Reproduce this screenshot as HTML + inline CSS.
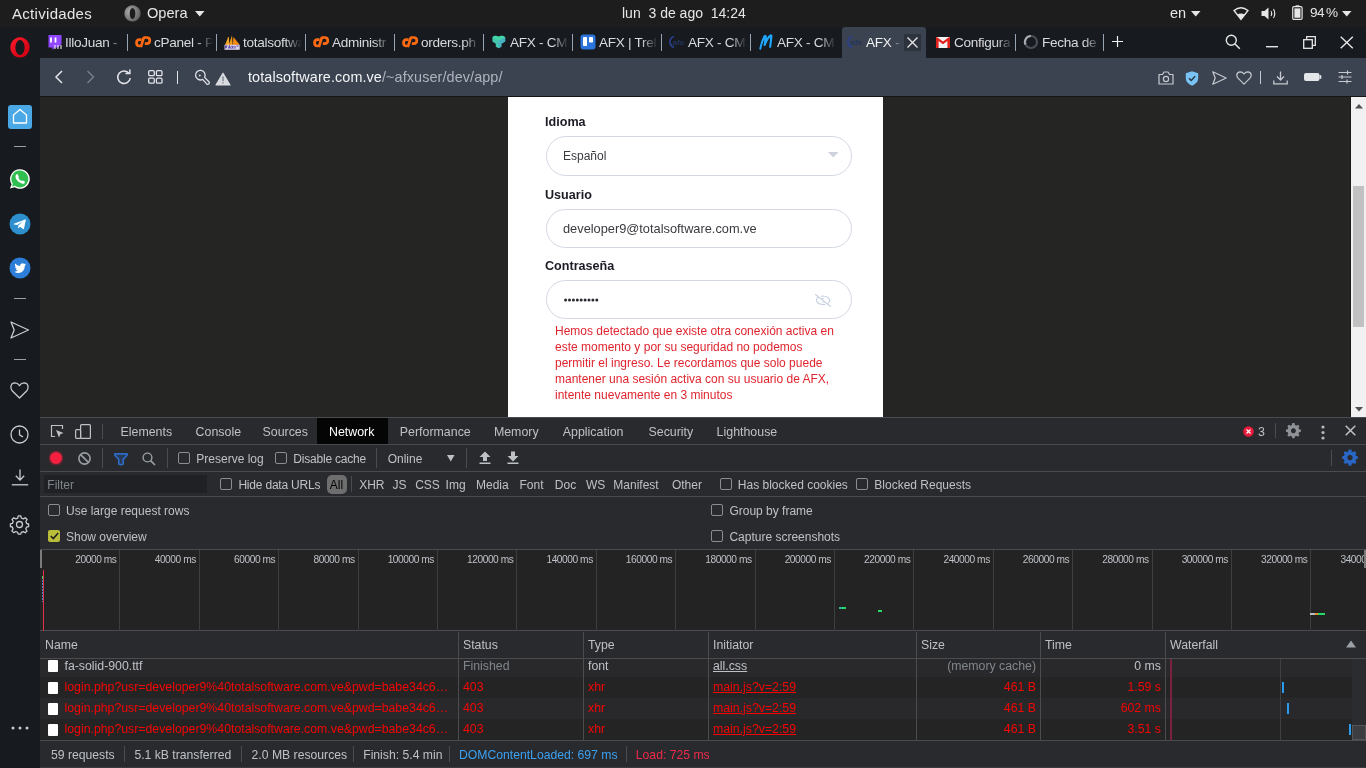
<!DOCTYPE html>
<html><head><meta charset="utf-8">
<style>
*{box-sizing:border-box}
html,body{margin:0;padding:0}
body{will-change:transform;width:1366px;height:768px;overflow:hidden;position:relative;background:#1d1d1d;font-family:"Liberation Sans",sans-serif;}
.a{position:absolute}
.t{position:absolute;white-space:pre;line-height:1}
svg{position:absolute;overflow:visible}
/* top bar */
#top{left:0;top:0;width:1366px;height:27px;background:#1d1d1d;color:#e6e6e6;font-size:14.5px}
#tabs{left:0;top:27px;width:1366px;height:31px;background:#171a1e}
#side{left:0;top:58px;width:40px;height:710px;background:#171a1e}
#addr{left:40px;top:58px;width:1326px;height:38px;background:#3b4250}
#page{left:40px;top:96px;width:1326px;height:321px;background:#252524;border-top:1px solid #151515}
#dev{left:40px;top:417px;width:1326px;height:351px;background:#292a2d;color:#bdc1c6;font-size:12.5px}
.tab{position:absolute;top:0;height:31px;width:89px}
.tab .tt{position:absolute;left:26px;top:8px;font-size:13.6px;letter-spacing:-0.3px;color:#d8dadd;white-space:pre;width:59px;overflow:hidden;line-height:16px;-webkit-mask-image:linear-gradient(90deg,#000 72%,transparent)}
.tab .sep{position:absolute;right:0;top:7px;width:1px;height:17px;background:#98a3b3}
.tab .ic{position:absolute;left:8px;top:7px;width:16px;height:16px}
.hl{position:absolute;left:0;width:1326px;height:1px;background:#474a4f}
.vl{position:absolute;width:1px;background:#4a4c50}
.cb{position:absolute;width:12px;height:12px;border:1px solid #8a8d91;border-radius:2px}
.dt{position:absolute;white-space:pre;line-height:1;font-size:12.5px;color:#bdc1c6}
</style></head><body>

<!-- ===== GNOME top bar ===== -->
<div id="top" class="a">
  <div class="t" style="left:12px;top:6px;font-size:15px;letter-spacing:0.3px">Actividades</div>
  <svg style="left:124px;top:5px" width="17" height="17" viewBox="0 0 17 17"><defs><radialGradient id="og" cx="0.35" cy="0.4" r="0.7"><stop offset="0" stop-color="#b0b0b0"/><stop offset="1" stop-color="#5a5a5a"/></radialGradient></defs><path fill-rule="evenodd" d="M8.5 0.3A8.1 8.1 0 1 1 8.49 0.3ZM8.5 3A2.9 5.5 0 1 0 8.51 3Z" fill="url(#og)"/></svg>
  <div class="t" style="left:147px;top:6px;font-size:14.6px">Opera</div>
  <svg style="left:195px;top:11px" width="10" height="6"><path d="M0 0H9.5L4.75 5.5Z" fill="#e6e6e6"/></svg>
  <div class="t" style="left:622px;top:6px;font-size:14px">lun  3 de ago  14:24</div>
  <div class="t" style="left:1170px;top:6px;font-size:14.5px">en</div>
  <svg style="left:1191px;top:11px" width="10" height="6"><path d="M0 0H9.5L4.75 5.5Z" fill="#e6e6e6"/></svg>
  <svg style="left:1233px;top:7px" width="16" height="13" viewBox="0 0 16 13"><path d="M1 3.5 Q8 -2 15 3.5 L8 12.5Z" fill="none" stroke="#e6e6e6" stroke-width="1.3"/><path d="M4.2 7.4 Q8 5.6 11.8 7.4 L8 12.5Z" fill="#e6e6e6"/></svg>
  <svg style="left:1261px;top:7px" width="16" height="13" viewBox="0 0 16 13"><path d="M0.5 4H3.5L7.5 0.5V12.5L3.5 9H0.5Z" fill="#e6e6e6"/><path d="M10 4Q11.5 6.5 10 9M12.5 2Q15 6.5 12.5 11" fill="none" stroke="#e6e6e6" stroke-width="1.1"/></svg>
  <svg style="left:1291.5px;top:5px" width="11" height="15" viewBox="0 0 12 16" preserveAspectRatio="none"><rect x="4" y="0.3" width="4" height="1.6" fill="#e6e6e6"/><rect x="0.8" y="1.8" width="10.2" height="13.6" rx="1.3" fill="none" stroke="#e6e6e6" stroke-width="1.3"/><rect x="2.6" y="3.6" width="6.6" height="10" fill="#e6e6e6"/></svg>
  <div class="t" style="left:1310px;top:6px;font-size:13.6px;letter-spacing:-0.6px">94&#8201;%</div>
  <svg style="left:1342px;top:11px" width="10" height="6"><path d="M0 0H9.5L4.75 5.5Z" fill="#e6e6e6"/></svg>
</div>

<!-- ===== Tab bar ===== -->
<div id="tabs" class="a">
  <svg style="left:10px;top:10px" width="20" height="21" viewBox="0 0 20 21"><defs><linearGradient id="rg" x1="0" y1="0" x2="1" y2="1"><stop offset="0" stop-color="#ff1b2d"/><stop offset="1" stop-color="#c8000f"/></linearGradient></defs><path fill-rule="evenodd" d="M10 0.3A9.6 10.1 0 1 1 9.99 0.3ZM10 2.9A4.6 7.6 0 1 0 10.01 2.9Z" fill="url(#rg)"/></svg>
  <div class="tab" style="left:39px"><svg class="ic" width="16" height="16" viewBox="0 0 16 16"><path d="M1.5 1H14.5V10L11 13.5H8L5.5 16V13.5H1.5Z" fill="#9146ff"/><path d="M4 3.5V8.5M8.5 3.5V8.5" stroke="#fff" stroke-width="1.8"/><path d="M7 12H9M10 12H12M13 12H15M7 14H9M10 14H12M13 14H15" stroke="#fff" stroke-width="1.2"/></svg><div class="tt">IlloJuan - </div><div class="sep"></div></div>
<div class="tab" style="left:128px"><svg class="ic" style="left:7px;top:9px;width:16px;height:12px" width="16" height="12" viewBox="0 0 16 12"><g fill="none" stroke="#ff6a12" stroke-width="2.7"><path d="M6.6 3.6H4.6Q1.5 3.6 1.5 6.8Q1.5 10 4.6 10H5.4"/><path d="M5.8 11.2L8.8 1.5"/><path d="M8.3 1.5H11.6Q14.8 1.5 14.8 4.6Q14.8 7.7 11.6 7.7H9.8"/></g></svg><div class="tt">cPanel - P</div><div class="sep"></div></div>
<div class="tab" style="left:217px"><svg class="ic" style="left:7px;top:7px" width="16" height="16" viewBox="0 0 16 16"><path d="M1 11L4.2 3.3Q4.6 2.8 4.9 3.5L5.3 11Z" fill="#f7a928"/><path d="M4.8 11L8 1.2L8.6 11Z" fill="#f59a1c"/><path d="M8.8 11L9.4 3L15.6 10.5L13.5 11Z" fill="#f08a10"/><rect x="0.5" y="10.8" width="15.2" height="5" fill="#d8d4e8"/><path d="M1.5 14.5V12H3.5M1.5 13.3H3M4.5 14.5L5.5 12L6.5 14.5M7.5 12L9.5 14.5M9.5 12L7.5 14.5M11 12V14.5M12.5 12L14.5 12" stroke="#5d44a8" stroke-width="1.1" fill="none"/></svg><div class="tt">totalsoftware</div><div class="sep"></div></div>
<div class="tab" style="left:306px"><svg class="ic" style="left:7px;top:9px;width:16px;height:12px" width="16" height="12" viewBox="0 0 16 12"><g fill="none" stroke="#ff6a12" stroke-width="2.7"><path d="M6.6 3.6H4.6Q1.5 3.6 1.5 6.8Q1.5 10 4.6 10H5.4"/><path d="M5.8 11.2L8.8 1.5"/><path d="M8.3 1.5H11.6Q14.8 1.5 14.8 4.6Q14.8 7.7 11.6 7.7H9.8"/></g></svg><div class="tt">Administr</div><div class="sep"></div></div>
<div class="tab" style="left:395px"><svg class="ic" style="left:7px;top:9px;width:16px;height:12px" width="16" height="12" viewBox="0 0 16 12"><g fill="none" stroke="#ff6a12" stroke-width="2.7"><path d="M6.6 3.6H4.6Q1.5 3.6 1.5 6.8Q1.5 10 4.6 10H5.4"/><path d="M5.8 11.2L8.8 1.5"/><path d="M8.3 1.5H11.6Q14.8 1.5 14.8 4.6Q14.8 7.7 11.6 7.7H9.8"/></g></svg><div class="tt">orders.ph</div><div class="sep"></div></div>
<div class="tab" style="left:484px"><svg class="ic" style="left:8px;top:8px;width:14px;height:14px" width="14" height="14" viewBox="0 0 14 14"><path d="M0.4 2.2Q3.2 -0.3 6.6 1.8Q10 -0.3 13.2 2.2V6.6L9.4 8.8V11.8L6.6 13.3L3.8 11.8V8.8L0.4 6.6Z" fill="#45c7ad"/><path d="M6.6 5.6L13.2 2.2V6.6L9.4 8.8V11.8L6.6 13.3Z" fill="#4aa9c9" opacity="0.75"/><path d="M0.4 2.2Q3.2 -0.3 6.6 1.8Q10 -0.3 13.2 2.2L6.6 5.6Z" fill="#3fd9a6" opacity="0.8"/></svg><div class="tt">AFX - CMS</div><div class="sep"></div></div>
<div class="tab" style="left:573px"><svg class="ic" style="left:7px" width="16" height="16" viewBox="0 0 16 16"><rect x="0.5" y="0.5" width="15" height="15" rx="3" fill="#2a74dc"/><rect x="3" y="3" width="4" height="9" rx="0.8" fill="#fff"/><rect x="9" y="3" width="4" height="5.5" rx="0.8" fill="#fff"/></svg><div class="tt">AFX | Trel</div><div class="sep"></div></div>
<div class="tab" style="left:662px"><svg class="ic" style="left:7px;top:8px;width:16px;height:14px" width="16" height="14" viewBox="0 0 16 14"><path d="M5 1.5Q0.5 3 1 7.5Q1.8 11.5 5 12.5" fill="none" stroke="#2a3f8f" stroke-width="1.6"/><text x="3.5" y="10" font-family="Liberation Sans" font-size="8" font-weight="700" fill="#24355e">afx</text></svg><div class="tt">AFX - CMS</div><div class="sep"></div></div>
<div class="tab" style="left:751px"><svg class="ic" style="left:8px;top:7px;width:14px;height:16px" width="14" height="16" viewBox="0 0 14 16"><path d="M1.3 14.6Q2.8 7 5.6 2.4Q6.6 1.2 6.8 2.8L5.6 11Q8.5 4 11.3 1.6Q12.6 0.8 12.4 2.6L11.2 12.8" fill="none" stroke="#1ea7fd" stroke-width="2.1" stroke-linecap="round" stroke-linejoin="round"/></svg><div class="tt">AFX - CMS</div></div>
<div class="a" style="left:842px;top:0px;width:84px;height:31px;background:#3b4250;border-radius:3px 3px 0 0">
  <svg style="left:5px;top:8px" width="16" height="14" viewBox="0 0 16 14"><path d="M5 1.5Q0.5 3 1 7.5Q1.8 11.5 5 12.5" fill="none" stroke="#2a3f8f" stroke-width="1.6"/><text x="3.5" y="10" font-family="Liberation Sans" font-size="8" font-weight="700" fill="#24355e">afx</text></svg>
  <div class="tt" style="position:absolute;left:24px;top:8px;font-size:13.6px;letter-spacing:-0.25px;color:#f2f2f2;white-space:pre;line-height:16px;width:37px;overflow:hidden;-webkit-mask-image:linear-gradient(90deg,#000 60%,transparent)">AFX - CMS</div>
  <div class="a" style="left:62px;top:7px;width:17px;height:17px;background:#2d333d"></div>
  <svg style="left:65px;top:10px" width="11" height="11" viewBox="0 0 11 11"><path d="M0.5 0.5L10.5 10.5M10.5 0.5L0.5 10.5" stroke="#e8e8e8" stroke-width="1.3"/></svg>
</div>
<div class="tab" style="left:926px"><svg class="ic" style="left:10px;top:10px;width:14px;height:11px" width="14" height="11" viewBox="0 0 14 11"><rect x="0" y="0" width="14" height="11" rx="0.8" fill="#f2f2f2"/><path d="M0 0.8V11H2.6V4L7 7.3L11.4 4V11H14V0.8L13.2 0L7 4.6L0.8 0Z" fill="#e0201b"/></svg><div class="tt" style="left:28px">Configura</div><div class="sep" style="right:-1px"></div></div>
<div class="tab" style="left:1015px"><svg class="ic" width="16" height="16" viewBox="0 0 16 16"><circle cx="8" cy="8" r="6" fill="none" stroke="#4a4f57" stroke-width="2.2"/><path d="M8 2A6 6 0 0 0 2.5 10.5" fill="none" stroke="#a9adb3" stroke-width="2.2"/></svg><div class="tt" style="left:27px">Fecha de</div><div class="sep" style="right:0"></div></div>
<svg style="left:1111px;top:8px" width="14" height="14" viewBox="0 0 14 14"><path d="M6.5 1V12M1 6.5H12" stroke="#f0f0f0" stroke-width="1.2"/></svg>
<svg style="left:1225px;top:7px" width="16" height="16" viewBox="0 0 16 16"><circle cx="6.3" cy="6.3" r="5" fill="none" stroke="#e6e6e6" stroke-width="1.4"/><path d="M10 10L14.8 14.8" stroke="#e6e6e6" stroke-width="1.5"/></svg>
<svg style="left:1266px;top:19px" width="12" height="2"><rect x="0" y="0" width="12" height="1.4" fill="#e6e6e6"/></svg>
<svg style="left:1303px;top:9px" width="14" height="13" viewBox="0 0 14 13"><rect x="0.7" y="3.7" width="8.6" height="8.6" fill="none" stroke="#e6e6e6" stroke-width="1.3"/><path d="M3.7 3.7V0.7H12.3V9.3H9.3" fill="none" stroke="#e6e6e6" stroke-width="1.3"/></svg>
<svg style="left:1340px;top:9px" width="14" height="13" viewBox="0 0 14 13"><path d="M0.7 0.7L12.8 12.3M12.8 0.7L0.7 12.3" stroke="#e6e6e6" stroke-width="1.4"/></svg>

</div>

<!-- ===== sidebar ===== -->
<div id="side" class="a">
  <div class="a" style="left:8px;top:47px;width:24px;height:24px;background:#4aa8e6;border-radius:3px"></div>
  <svg style="left:12px;top:50px" width="16" height="17" viewBox="0 0 16 17"><path d="M1.5 7L8 1.5L14.5 7V15H1.5Z" fill="none" stroke="#fff" stroke-width="1.3" stroke-linejoin="round"/></svg>
  <div class="a" style="left:14px;top:88px;width:12px;height:1px;background:#9aa0a8"></div>
  <svg style="left:9px;top:110px" width="22" height="22" viewBox="0 0 22 22"><path d="M11 1.2A9.8 9.8 0 1 1 5.6 19.2L1 20.6L2.6 16.2A9.8 9.8 0 0 1 11 1.2Z" fill="#fff"/><path d="M11 2.6A8.4 8.4 0 1 1 6 17.8L3 18.6L3.9 15.8A8.4 8.4 0 0 1 11 2.6Z" fill="#2fbe4f"/><path d="M7.2 6.5Q8 5.6 8.7 6.4L9.8 8.5Q10 9.2 9.3 9.8Q10.3 12 12.5 13Q13.1 12.3 13.7 12.5L15.7 13.6Q16.3 14.2 15.4 15.2Q14.4 16 12.8 15.6Q8.3 14 6.5 9.5Q6.3 7.5 7.2 6.5Z" fill="#fff"/></svg>
  <svg style="left:9px;top:155px" width="22" height="22" viewBox="0 0 22 22"><circle cx="11" cy="11" r="10.5" fill="#2e8fce"/><path d="M4.8 10.8L16.2 6.4Q17 6.2 16.8 7.2L15 15.6Q14.7 16.4 14 16L11 13.8L9.6 15.2Q9.2 15.5 9.1 15L9.3 12.6L14 8.3L8.2 11.9L5.2 11.6Q4.4 11.3 4.8 10.8Z" fill="#fff"/></svg>
  <svg style="left:9px;top:199px" width="22" height="22" viewBox="0 0 22 22"><circle cx="11" cy="11" r="10.5" fill="#2d7ed8"/><path d="M17 7.3Q16.3 7.6 15.6 7.7Q16.4 7.2 16.7 6.4Q16 6.8 15.2 7Q14.5 6.2 13.4 6.2Q11.2 6.3 11 8.6L11.1 9.1Q8.1 9 6.1 6.6Q5.3 8.5 6.9 9.9Q6.4 9.9 5.9 9.6Q6 11.4 7.8 11.9Q7.3 12.1 6.8 12Q7.3 13.5 9 13.6Q7.4 14.9 5.2 14.7Q7 15.9 9.2 15.9Q13.4 15.8 15.2 11.9Q15.8 10.5 15.7 9Q16.5 8.3 17 7.3Z" fill="#fff"/></svg>
  <div class="a" style="left:14px;top:240px;width:12px;height:1px;background:#9aa0a8"></div>
  <svg style="left:10px;top:263px" width="20" height="18" viewBox="0 0 20 18"><path d="M1 1L18.5 9L1 17L4.2 9Z" fill="none" stroke="#c8ccd2" stroke-width="1.3" stroke-linejoin="round"/></svg>
  <div class="a" style="left:14px;top:301px;width:12px;height:1px;background:#9aa0a8"></div>
  <svg style="left:10px;top:324px" width="19" height="17" viewBox="0 0 19 17"><path d="M9.5 16L2.4 9Q0.7 7 0.9 4.6Q1.4 1 5 0.9Q7.7 0.9 9.5 3.6Q11.3 0.9 14 0.9Q17.6 1 18.1 4.6Q18.3 7 16.6 9Z" fill="none" stroke="#c8ccd2" stroke-width="1.3" stroke-linejoin="round"/></svg>
  <svg style="left:10px;top:367px" width="19" height="19" viewBox="0 0 19 19"><circle cx="9.5" cy="9.5" r="8.5" fill="none" stroke="#c8ccd2" stroke-width="1.3"/><path d="M9.5 4.5V9.8L13 12" fill="none" stroke="#c8ccd2" stroke-width="1.3"/></svg>
  <svg style="left:11px;top:411px" width="18" height="17" viewBox="0 0 18 17"><path d="M9 0.5V11M4.8 6.8L9 11L13.2 6.8" fill="none" stroke="#c8ccd2" stroke-width="1.3"/><path d="M0.8 15.8H17.2" stroke="#c8ccd2" stroke-width="1.3"/></svg>
  <svg style="left:10px;top:457px" width="19" height="19" viewBox="0 0 19 19"><path d="M8 0.8H11L11.5 3.2L13.5 4.1L15.6 2.8L17.6 4.9L16.2 7L17 9L19 9.5V12.5L17 13L16.2 15L17.4 17L15.3 19L13.2 17.8L11.3 18.6L10.8 21H7.8" fill="none" stroke="none"/><circle cx="9.5" cy="9.5" r="3" fill="none" stroke="#c8ccd2" stroke-width="1.3"/><path d="M8.2 0.8H10.8L11.3 3L13.3 3.9L15.3 2.7L17.1 4.5L15.9 6.5L16.7 8.5L18.6 9V11.6L16.6 12.1L15.8 14L17 16L15.2 17.8L13.2 16.6L11.3 17.4L10.8 19.2H8.2L7.7 17.3L5.7 16.5L3.8 17.7L1.9 15.9L3.1 13.9L2.3 12L0.4 11.5V8.9L2.4 8.4L3.2 6.4L2 4.5L3.8 2.7L5.8 3.9L7.7 3.1Z" fill="none" stroke="#c8ccd2" stroke-width="1.3" stroke-linejoin="round"/></svg>
  <svg style="left:11px;top:668px" width="18" height="4" viewBox="0 0 18 4"><circle cx="2" cy="2" r="1.5" fill="#c8ccd2"/><circle cx="9" cy="2" r="1.5" fill="#c8ccd2"/><circle cx="16" cy="2" r="1.5" fill="#c8ccd2"/></svg>
</div>

<!-- ===== address bar ===== -->
<div id="addr" class="a">
  <svg style="left:14px;top:12px" width="10" height="14" viewBox="0 0 10 14"><path d="M8 1L2 7L8 13" fill="none" stroke="#e2e4e8" stroke-width="1.5"/></svg>
  <svg style="left:46px;top:12px" width="10" height="14" viewBox="0 0 10 14"><path d="M1.5 1L7.5 7L1.5 13" fill="none" stroke="#7a818c" stroke-width="1.4"/></svg>
  <svg style="left:76px;top:11px" width="16" height="16" viewBox="0 0 16 16"><path d="M13.2 4.6A6.3 6.3 0 1 0 14.3 9" fill="none" stroke="#e2e4e8" stroke-width="1.5"/><path d="M9.5 4.6H13.9V0.6" fill="none" stroke="#e2e4e8" stroke-width="1.5"/></svg>
  <svg style="left:108px;top:12px" width="15" height="14" viewBox="0 0 15 14"><rect x="0.7" y="0.7" width="5.6" height="5" rx="1.2" fill="none" stroke="#e2e4e8" stroke-width="1.3"/><rect x="8.4" y="0.7" width="5.6" height="5" rx="1.2" fill="none" stroke="#e2e4e8" stroke-width="1.3"/><rect x="0.7" y="8.2" width="5.6" height="5" rx="1.2" fill="none" stroke="#e2e4e8" stroke-width="1.3"/><rect x="8.4" y="8.2" width="5.6" height="5" rx="1.2" fill="none" stroke="#e2e4e8" stroke-width="1.3"/></svg>
  <div class="a" style="left:137px;top:13px;width:1px;height:13px;background:#e2e4e8"></div>
  <svg style="left:154px;top:11px" width="17" height="17" viewBox="0 0 17 17"><path d="M8.6 10.4A4.8 4.8 0 1 1 10.6 8.4L14.9 12.7Q15.9 13.9 14.9 14.9Q13.9 15.9 12.7 14.9Z" fill="none" stroke="#e2e4e8" stroke-width="1.3" stroke-linejoin="round"/><circle cx="5.8" cy="6.5" r="0.9" fill="#e2e4e8"/></svg>
  <svg style="left:175px;top:14px" width="16" height="14" viewBox="0 0 16 14"><path d="M8 1.2L15 13H1Z" fill="#d9dce0" stroke="#d9dce0" stroke-width="1.2" stroke-linejoin="round"/><rect x="7.2" y="4.4" width="1.6" height="4.8" fill="#868c95"/><rect x="7.2" y="10.3" width="1.6" height="1.1" fill="#868c95"/></svg>
  <div class="t" style="left:208px;top:12px;font-size:14.4px;letter-spacing:0.1px;color:#f4f5f6">totalsoftware.com.ve<span style="color:#aeb4bd">/~afxuser/dev/app/</span></div>
  <svg style="left:1118px;top:13px" width="16" height="14" viewBox="0 0 16 14"><path d="M1 3.5H4.5L6 1H10L11.5 3.5H15V13H1Z" fill="none" stroke="#c6cad0" stroke-width="1.2" stroke-linejoin="round"/><circle cx="8" cy="8" r="2.6" fill="none" stroke="#c6cad0" stroke-width="1.2"/></svg>
  <svg style="left:1145px;top:13px" width="14" height="15" viewBox="0 0 14 15"><path d="M7 0.3L13.2 2.2V7.5Q13 12 7 14.7Q1 12 0.8 7.5V2.2Z" fill="#79c3f5"/><path d="M4 7.2L6.2 9.4L10.2 5.2" fill="none" stroke="#2d3440" stroke-width="1.4"/></svg>
  <svg style="left:1172px;top:13px" width="15" height="14" viewBox="0 0 15 14"><path d="M0.8 0.8L14.2 7L0.8 13.2L3.2 7Z" fill="none" stroke="#c6cad0" stroke-width="1.2" stroke-linejoin="round"/></svg>
  <svg style="left:1196px;top:13px" width="16" height="14" viewBox="0 0 16 14"><path d="M8 13.2L2 7.2Q0.6 5.6 0.8 3.8Q1.2 0.9 4.2 0.8Q6.5 0.8 8 3Q9.5 0.8 11.8 0.8Q14.8 0.9 15.2 3.8Q15.4 5.6 14 7.2Z" fill="none" stroke="#c6cad0" stroke-width="1.2" stroke-linejoin="round"/></svg>
  <div class="a" style="left:1220px;top:13px;width:1px;height:13px;background:#c6cad0"></div>
  <svg style="left:1233px;top:13px" width="15" height="14" viewBox="0 0 15 14"><path d="M7.5 0.5V9M4 5.5L7.5 9L11 5.5" fill="none" stroke="#c6cad0" stroke-width="1.3"/><path d="M0.8 9.5V12.8H14.2V9.5" fill="none" stroke="#c6cad0" stroke-width="1.3"/></svg>
  <svg style="left:1264px;top:15px" width="18" height="9" viewBox="0 0 18 9"><rect x="0" y="0" width="15.5" height="8" rx="2" fill="#e4e6e9"/><rect x="15.5" y="2.2" width="1.8" height="3.6" fill="#e4e6e9"/></svg>
  <svg style="left:1298px;top:12px" width="14" height="14" viewBox="0 0 14 14"><path d="M0.5 2.5H13.5M0.5 7H13.5M0.5 11.5H13.5" stroke="#c6cad0" stroke-width="1.2"/><path d="M9.5 0.5V4.5M4 5V9M9 9.5V13.5" stroke="#c6cad0" stroke-width="1.2"/></svg>
</div>

<!-- ===== page ===== -->
<div id="page" class="a">
  <div class="a" style="left:468px;top:0;width:375px;height:320px;background:#fff">
    <div class="t" style="left:37px;top:18.7px;font-size:12.6px;font-weight:700;color:#1c1c26">Idioma</div>
    <div class="a" style="left:38px;top:39px;width:306px;height:40px;border:1px solid #d3d8e3;border-radius:20px"></div>
    <div class="t" style="left:55px;top:53.3px;font-size:12px;color:#3a3a3f">Español</div>
    <svg style="left:320px;top:55px" width="11" height="6" viewBox="0 0 11 6"><path d="M0 0H10.5L5.25 5.6Z" fill="#cdd2dd"/></svg>
    <div class="t" style="left:37px;top:91.6px;font-size:12.6px;font-weight:700;color:#1c1c26">Usuario</div>
    <div class="a" style="left:38px;top:112px;width:306px;height:39px;border:1px solid #d3d8e3;border-radius:20px"></div>
    <div class="t" style="left:55px;top:126px;font-size:12.8px;color:#3a3a3f">developer9@totalsoftware.com.ve</div>
    <div class="t" style="left:37px;top:163.2px;font-size:12.6px;font-weight:700;color:#1c1c26">Contraseña</div>
    <div class="a" style="left:38px;top:183px;width:306px;height:39px;border:1px solid #d3d8e3;border-radius:20px"></div>
    <svg style="left:56px;top:201px" width="36" height="4" viewBox="0 0 36 4"><g fill="#2a2a30"><circle cx="1.6" cy="2" r="1.5"/><circle cx="5.5" cy="2" r="1.5"/><circle cx="9.4" cy="2" r="1.5"/><circle cx="13.3" cy="2" r="1.5"/><circle cx="17.2" cy="2" r="1.5"/><circle cx="21.1" cy="2" r="1.5"/><circle cx="25" cy="2" r="1.5"/><circle cx="28.9" cy="2" r="1.5"/><circle cx="32.8" cy="2" r="1.5"/></g></svg>
    <svg style="left:306px;top:197px" width="18" height="14" viewBox="0 0 18 14"><g fill="none" stroke="#c9d3e4" stroke-width="1.1"><path d="M4.5 2.8Q2.5 4 2.3 6.5Q3.5 10.2 9 10.6Q10.5 10.6 11.5 10.2"/><path d="M7 2.2Q8 2 9 2Q14.5 2.2 15.8 6.5Q15.2 8.3 14 9.2"/><path d="M7.5 5.6Q8 4.3 9.8 4.6"/><path d="M10.5 7Q10 8.3 8.5 8.2"/><path d="M1.2 0.3L16.8 12.8" stroke-width="1.2"/></g></svg>
    <div class="a" style="left:47px;top:226px;width:320px;font-size:12px;line-height:16px;color:#e0252f">Hemos detectado que existe otra conexión activa en<br>este momento y por su seguridad no podemos<br>permitir el ingreso. Le recordamos que solo puede<br>mantener una sesión activa con su usuario de AFX,<br>intente nuevamente en 3 minutos</div>
  </div>
  <div class="a" style="left:1310px;top:0;width:16px;height:320px;background:#f1f1f1;border-left:1px solid #1a1a1a"></div>
  <svg style="left:1315px;top:7px" width="8" height="5" viewBox="0 0 8 5"><path d="M0 4.5L4 0L8 4.5Z" fill="#505050"/></svg>
  <div class="a" style="left:1313px;top:89px;width:11px;height:141px;background:#c1c1c1"></div>
  <svg style="left:1315px;top:310px" width="8" height="5" viewBox="0 0 8 5"><path d="M0 0L4 4.5L8 0Z" fill="#505050"/></svg>
</div>

<!-- ===== devtools ===== -->
<!--DEV-->
<div id="dev" class="a">
<div class="hl" style="top:0px;background:#494b4f"></div>
<div class="hl" style="top:27px;background:#494b4f"></div>
<div class="hl" style="top:54px;background:#494b4f"></div>
<div class="hl" style="top:79px;background:#494b4f"></div>
<svg style="left:10px;top:7px" width="14" height="14" viewBox="0 0 14 14"><path d="M5 12.5H1.5V1.5H12.5V5" fill="none" stroke="#bdc1c6" stroke-width="1.2"/><path d="M6 6L13.5 9L10.3 10.3L9 13.5Z" fill="#bdc1c6"/></svg>
<svg style="left:35px;top:7px" width="16" height="15" viewBox="0 0 16 15"><rect x="5.6" y="0.6" width="9.8" height="13.8" rx="1" fill="none" stroke="#bdc1c6" stroke-width="1.2"/><rect x="0.6" y="5.6" width="5" height="8.8" rx="1" fill="#292a2d" stroke="#bdc1c6" stroke-width="1.2"/></svg>
<div class="vl" style="left:62px;top:7px;height:15px;background:#4a4c50"></div>
<div class="a" style="left:277px;top:1px;width:71px;height:26px;background:#050505"></div>
<div class="dt" style="left:80.5px;top:9.0px;color:#bdc1c6;font-size:12.4px;">Elements</div>
<div class="dt" style="left:155.6px;top:9.0px;color:#bdc1c6;font-size:12.4px;">Console</div>
<div class="dt" style="left:222.5px;top:9.0px;color:#bdc1c6;font-size:12.4px;">Sources</div>
<div class="dt" style="left:289.0px;top:9.0px;color:#ffffff;font-size:12.4px;">Network</div>
<div class="dt" style="left:359.8px;top:9.0px;color:#bdc1c6;font-size:12.4px;">Performance</div>
<div class="dt" style="left:453.9px;top:9.0px;color:#bdc1c6;font-size:12.4px;">Memory</div>
<div class="dt" style="left:522.8px;top:9.0px;color:#bdc1c6;font-size:12.4px;">Application</div>
<div class="dt" style="left:608.5px;top:9.0px;color:#bdc1c6;font-size:12.4px;">Security</div>
<div class="dt" style="left:676.6px;top:9.0px;color:#bdc1c6;font-size:12.4px;">Lighthouse</div>
<svg style="left:1203px;top:9px" width="11" height="11" viewBox="0 0 11 11"><circle cx="5.5" cy="5.5" r="5.3" fill="#e81a3b"/><path d="M3.5 3.5L7.5 7.5M7.5 3.5L3.5 7.5" stroke="#fff" stroke-width="1.2"/></svg>
<div class="dt" style="left:1218.0px;top:9.0px;color:#bdc1c6;font-size:12.4px;">3</div>
<div class="vl" style="left:1235px;top:6px;height:15px;background:#4a4c50"></div>
<svg style="left:1246px;top:7px" width="15" height="15" viewBox="0 0 15 15"><g fill="#8e9196"><path fill-rule="evenodd" d="M6.3 0.3H8.7L9.1 2.3Q9.9 2.6 10.6 3.1L12.4 2L14.1 3.7L13 5.5Q13.4 6.2 13.6 7L15.6 7.4V9.8L13.6 10.2Q13.4 11 13 11.7L14.1 13.5L12.4 15.2L10.6 14.1Q9.9 14.6 9.1 14.9L8.7 16.9H6.3L5.9 14.9Q5.1 14.6 4.4 14.1L2.6 15.2L0.9 13.5L2 11.7Q1.6 11 1.4 10.2L-0.6 9.8V7.4L1.4 7Q1.6 6.2 2 5.5L0.9 3.7L2.6 2L4.4 3.1Q5.1 2.6 5.9 2.3ZM7.5 5.9A2.7 2.7 0 1 0 7.51 5.9Z" transform="translate(0.5,-1.2) scale(0.92)"/></g></svg>
<svg style="left:1281px;top:8px" width="4" height="15" viewBox="0 0 4 15"><circle cx="2" cy="2" r="1.6" fill="#b5b8bd"/><circle cx="2" cy="7.5" r="1.6" fill="#b5b8bd"/><circle cx="2" cy="13" r="1.6" fill="#b5b8bd"/></svg>
<svg style="left:1305px;top:8px" width="11" height="11" viewBox="0 0 11 11"><path d="M0.7 0.7L10.3 10.3M10.3 0.7L0.7 10.3" stroke="#bdc1c6" stroke-width="1.5"/></svg>
<div class="a" style="left:10px;top:35px;width:12px;height:12px;border-radius:50%;background:#f4203f;box-shadow:0 0 2px 1px rgba(244,32,63,0.4)"></div>
<svg style="left:38px;top:35px" width="13" height="13" viewBox="0 0 13 13"><circle cx="6.5" cy="6.5" r="5.6" fill="none" stroke="#9aa0a6" stroke-width="1.6"/><path d="M2.6 2.6L10.4 10.4" stroke="#9aa0a6" stroke-width="1.6"/></svg>
<div class="vl" style="left:62px;top:31px;height:20px;background:#4a4c50"></div>
<svg style="left:74px;top:36px" width="14" height="13" viewBox="0 0 14 13"><path d="M0.9 0.9H13.1V2.3L9.2 6.4V11.1Q7 12.2 4.8 11.1V6.4L0.9 2.3Z" fill="#283a56" stroke="#2d6cc9" stroke-width="1.6" stroke-linejoin="round"/></svg>
<svg style="left:102px;top:35px" width="14" height="14" viewBox="0 0 14 14"><circle cx="5.5" cy="5.5" r="4.4" fill="none" stroke="#9aa0a6" stroke-width="1.4"/><path d="M8.6 8.6L13 13" stroke="#9aa0a6" stroke-width="1.6"/></svg>
<div class="vl" style="left:127px;top:31px;height:20px;background:#4a4c50"></div>
<div class="cb" style="left:138px;top:35px"></div>
<div class="dt" style="left:156.3px;top:36.0px;color:#bdc1c6;font-size:12px;">Preserve log</div>
<div class="cb" style="left:235px;top:35px"></div>
<div class="dt" style="left:253.3px;top:36.0px;color:#bdc1c6;font-size:12px;letter-spacing:-0.2px">Disable cache</div>
<div class="vl" style="left:336px;top:31px;height:20px;background:#4a4c50"></div>
<div class="dt" style="left:347.7px;top:36.0px;color:#bdc1c6;font-size:12px;">Online</div>
<svg style="left:407px;top:38px" width="8" height="7" viewBox="0 0 8 7"><path d="M0 0H7.5L3.75 6.5Z" fill="#bdc1c6"/></svg>
<div class="vl" style="left:426px;top:31px;height:20px;background:#4a4c50"></div>
<svg style="left:439px;top:34px" width="12" height="14" viewBox="0 0 12 14"><path d="M6 0.5L11.5 6H8V10H4V6H0.5Z" fill="#bdc1c6"/><rect x="0.5" y="11.5" width="11" height="1.5" fill="#bdc1c6"/></svg>
<svg style="left:467px;top:34px" width="12" height="14" viewBox="0 0 12 14"><path d="M4 0.5H8V5H11.5L6 10.5L0.5 5H4Z" fill="#bdc1c6"/><rect x="0.5" y="11.5" width="11" height="1.5" fill="#bdc1c6"/></svg>
<div class="vl" style="left:1291px;top:33px;height:16px;background:#4a4c50"></div>
<svg style="left:1302px;top:33px" width="16" height="16" viewBox="0 0 16 16"><path fill-rule="evenodd" fill="#2a66c4" d="M6.6 0.5H9.4L9.8 2.5Q10.6 2.8 11.2 3.3L13 2.2L14.8 4L13.7 5.8Q14.1 6.5 14.4 7.3L16.3 7.7V10.3L14.4 10.7Q14.1 11.5 13.7 12.2L14.8 14L13 15.8L11.2 14.7Q10.6 15.2 9.8 15.5L9.4 17.5H6.6L6.2 15.5Q5.4 15.2 4.8 14.7L3 15.8L1.2 14L2.3 12.2Q1.9 11.5 1.6 10.7L-0.3 10.3V7.7L1.6 7.3Q1.9 6.5 2.3 5.8L1.2 4L3 2.2L4.8 3.3Q5.4 2.8 6.2 2.5ZM8 6.2A2.8 2.8 0 1 0 8.01 6.2Z" transform="translate(0.4,-1) scale(0.95)"/></svg>
<div class="a" style="left:3.7px;top:58px;width:163px;height:18px;background:#202124"></div>
<div class="dt" style="left:7.3px;top:62.0px;color:#80868b;font-size:12px;">Filter</div>
<div class="cb" style="left:180px;top:61px"></div>
<div class="dt" style="left:198.4px;top:62.0px;color:#bdc1c6;font-size:12px;letter-spacing:-0.2px">Hide data URLs</div>
<div class="a" style="left:287px;top:58px;width:20px;height:19px;background:#6e6e6e;border-radius:5px"></div>
<div class="dt" style="left:289.8px;top:62.0px;color:#050505;font-size:12px;">All</div>
<div class="vl" style="left:311px;top:59px;height:16px;background:#4a4c50"></div>
<div class="dt" style="left:319.2px;top:62.0px;color:#bdc1c6;font-size:12px;">XHR</div>
<div class="dt" style="left:352.5px;top:62.0px;color:#bdc1c6;font-size:12px;">JS</div>
<div class="dt" style="left:375.2px;top:62.0px;color:#bdc1c6;font-size:12px;">CSS</div>
<div class="dt" style="left:405.6px;top:62.0px;color:#bdc1c6;font-size:12px;">Img</div>
<div class="dt" style="left:436.0px;top:62.0px;color:#bdc1c6;font-size:12px;">Media</div>
<div class="dt" style="left:479.5px;top:62.0px;color:#bdc1c6;font-size:12px;">Font</div>
<div class="dt" style="left:514.8px;top:62.0px;color:#bdc1c6;font-size:12px;">Doc</div>
<div class="dt" style="left:545.9px;top:62.0px;color:#bdc1c6;font-size:12px;">WS</div>
<div class="dt" style="left:573.3px;top:62.0px;color:#bdc1c6;font-size:12px;">Manifest</div>
<div class="dt" style="left:631.9px;top:62.0px;color:#bdc1c6;font-size:12px;">Other</div>
<div class="cb" style="left:679.5px;top:61px"></div>
<div class="dt" style="left:697.8px;top:62.0px;color:#bdc1c6;font-size:12px;">Has blocked cookies</div>
<div class="cb" style="left:816px;top:61px"></div>
<div class="dt" style="left:834.3px;top:62.0px;color:#bdc1c6;font-size:12px;">Blocked Requests</div>
<div class="cb" style="left:8px;top:87px"></div>
<div class="dt" style="left:26.0px;top:88.0px;color:#bdc1c6;font-size:12px;">Use large request rows</div>
<div class="a" style="left:8px;top:113px;width:12px;height:12px;background:#b9bd3a;border-radius:2px"></div><svg style="left:10px;top:115px" width="9" height="8" viewBox="0 0 9 8"><path d="M0.8 4L3.3 6.6L8.2 1" fill="none" stroke="#1f1f1f" stroke-width="1.5"/></svg>
<div class="dt" style="left:26.0px;top:114.0px;color:#bdc1c6;font-size:12px;">Show overview</div>
<div class="cb" style="left:671px;top:87px"></div>
<div class="dt" style="left:689.4px;top:88.0px;color:#bdc1c6;font-size:12px;">Group by frame</div>
<div class="cb" style="left:671px;top:113px"></div>
<div class="dt" style="left:689.4px;top:114.0px;color:#bdc1c6;font-size:12px;">Capture screenshots</div>
<div class="a" style="left:0;top:132px;width:1326px;height:82px;background:#232323;border-top:1px solid #4a4c50;border-bottom:1px solid #4a4c50"></div>
<div class="vl" style="left:79px;top:133px;height:81px;background:#3d3e40"></div>
<div class="dt" style="left:-123.6px;top:138px;width:200px;text-align:right;font-size:10.2px;color:#bdc1c6;letter-spacing:-0.45px">20000 ms</div>
<div class="vl" style="left:159px;top:133px;height:81px;background:#3d3e40"></div>
<div class="dt" style="left:-44.2px;top:138px;width:200px;text-align:right;font-size:10.2px;color:#bdc1c6;letter-spacing:-0.45px">40000 ms</div>
<div class="vl" style="left:238px;top:133px;height:81px;background:#3d3e40"></div>
<div class="dt" style="left:35.2px;top:138px;width:200px;text-align:right;font-size:10.2px;color:#bdc1c6;letter-spacing:-0.45px">60000 ms</div>
<div class="vl" style="left:318px;top:133px;height:81px;background:#3d3e40"></div>
<div class="dt" style="left:114.6px;top:138px;width:200px;text-align:right;font-size:10.2px;color:#bdc1c6;letter-spacing:-0.45px">80000 ms</div>
<div class="vl" style="left:397px;top:133px;height:81px;background:#3d3e40"></div>
<div class="dt" style="left:194.0px;top:138px;width:200px;text-align:right;font-size:10.2px;color:#bdc1c6;letter-spacing:-0.45px">100000 ms</div>
<div class="vl" style="left:476px;top:133px;height:81px;background:#3d3e40"></div>
<div class="dt" style="left:273.4px;top:138px;width:200px;text-align:right;font-size:10.2px;color:#bdc1c6;letter-spacing:-0.45px">120000 ms</div>
<div class="vl" style="left:556px;top:133px;height:81px;background:#3d3e40"></div>
<div class="dt" style="left:352.8px;top:138px;width:200px;text-align:right;font-size:10.2px;color:#bdc1c6;letter-spacing:-0.45px">140000 ms</div>
<div class="vl" style="left:635px;top:133px;height:81px;background:#3d3e40"></div>
<div class="dt" style="left:432.2px;top:138px;width:200px;text-align:right;font-size:10.2px;color:#bdc1c6;letter-spacing:-0.45px">160000 ms</div>
<div class="vl" style="left:715px;top:133px;height:81px;background:#3d3e40"></div>
<div class="dt" style="left:511.6px;top:138px;width:200px;text-align:right;font-size:10.2px;color:#bdc1c6;letter-spacing:-0.45px">180000 ms</div>
<div class="vl" style="left:794px;top:133px;height:81px;background:#3d3e40"></div>
<div class="dt" style="left:591.0px;top:138px;width:200px;text-align:right;font-size:10.2px;color:#bdc1c6;letter-spacing:-0.45px">200000 ms</div>
<div class="vl" style="left:873px;top:133px;height:81px;background:#3d3e40"></div>
<div class="dt" style="left:670.4px;top:138px;width:200px;text-align:right;font-size:10.2px;color:#bdc1c6;letter-spacing:-0.45px">220000 ms</div>
<div class="vl" style="left:953px;top:133px;height:81px;background:#3d3e40"></div>
<div class="dt" style="left:749.8px;top:138px;width:200px;text-align:right;font-size:10.2px;color:#bdc1c6;letter-spacing:-0.45px">240000 ms</div>
<div class="vl" style="left:1032px;top:133px;height:81px;background:#3d3e40"></div>
<div class="dt" style="left:829.2px;top:138px;width:200px;text-align:right;font-size:10.2px;color:#bdc1c6;letter-spacing:-0.45px">260000 ms</div>
<div class="vl" style="left:1112px;top:133px;height:81px;background:#3d3e40"></div>
<div class="dt" style="left:908.6px;top:138px;width:200px;text-align:right;font-size:10.2px;color:#bdc1c6;letter-spacing:-0.45px">280000 ms</div>
<div class="vl" style="left:1191px;top:133px;height:81px;background:#3d3e40"></div>
<div class="dt" style="left:988.0px;top:138px;width:200px;text-align:right;font-size:10.2px;color:#bdc1c6;letter-spacing:-0.45px">300000 ms</div>
<div class="vl" style="left:1270px;top:133px;height:81px;background:#3d3e40"></div>
<div class="dt" style="left:1067.4px;top:138px;width:200px;text-align:right;font-size:10.2px;color:#bdc1c6;letter-spacing:-0.45px">320000 ms</div>
<div class="dt" style="left:1146.8px;top:138px;width:200px;text-align:right;font-size:10.2px;color:#bdc1c6;letter-spacing:-0.45px">340000 ms</div>
<div class="a" style="left:0;top:133px;width:2px;height:18px;background:#7a7b7d"></div>
<div class="a" style="left:1324px;top:133px;width:2px;height:18px;background:#7a7b7d"></div>
<div class="a" style="left:3px;top:153px;width:1px;height:61px;background:#e0304a"></div>
<div class="a" style="left:1.5px;top:159px;width:1.5px;height:3px;background:#2fd36a"></div>
<div class="a" style="left:2px;top:163px;width:1px;height:22px;background:repeating-linear-gradient(#3d8ed0 0 2px,transparent 2px 3px)"></div>
<div class="a" style="left:799px;top:190px;width:7px;height:2px;background:linear-gradient(90deg,#2bb5a0 0 40%,#22d96a 40%)"></div>
<div class="a" style="left:838px;top:193px;width:4px;height:2px;background:#22d96a"></div>
<div class="a" style="left:1270px;top:196px;width:15px;height:2px;background:linear-gradient(90deg,#bdbdbd 0 35%,#f08a24 35% 55%,#22d96a 55%)"></div>
<div class="a" style="left:0;top:214px;width:1326px;height:28px;background:#292a2d;border-bottom:1px solid #4a4c50"></div>
<div class="a" style="left:0;top:242px;width:1326px;height:17.5px;background:#29292c"></div>
<div class="a" style="left:0;top:259.5px;width:1326px;height:21px;background:#242425"></div>
<div class="a" style="left:0;top:280.5px;width:1326px;height:21px;background:#29292b"></div>
<div class="a" style="left:0;top:301.5px;width:1326px;height:21.5px;background:#242425"></div>
<div class="vl" style="left:418px;top:215px;height:108px;background:#4a4c50"></div>
<div class="vl" style="left:543px;top:215px;height:108px;background:#4a4c50"></div>
<div class="vl" style="left:668px;top:215px;height:108px;background:#4a4c50"></div>
<div class="vl" style="left:876px;top:215px;height:108px;background:#4a4c50"></div>
<div class="vl" style="left:1000px;top:215px;height:108px;background:#4a4c50"></div>
<div class="vl" style="left:1125px;top:215px;height:108px;background:#4a4c50"></div>
<div class="vl" style="left:1240px;top:242px;height:81px;background:#3e3f42"></div>
<div class="dt" style="left:5.0px;top:222.0px;color:#bdc1c6;font-size:12.3px;">Name</div>
<div class="dt" style="left:423.0px;top:222.0px;color:#bdc1c6;font-size:12.3px;">Status</div>
<div class="dt" style="left:548.0px;top:222.0px;color:#bdc1c6;font-size:12.3px;">Type</div>
<div class="dt" style="left:673.0px;top:222.0px;color:#bdc1c6;font-size:12.3px;">Initiator</div>
<div class="dt" style="left:881.0px;top:222.0px;color:#bdc1c6;font-size:12.3px;">Size</div>
<div class="dt" style="left:1005.0px;top:222.0px;color:#bdc1c6;font-size:12.3px;">Time</div>
<div class="dt" style="left:1130.0px;top:222.0px;color:#bdc1c6;font-size:12.3px;">Waterfall</div>
<svg style="left:1306px;top:223px" width="10" height="8" viewBox="0 0 10 8"><path d="M0 7.5L5 0.5L10 7.5Z" fill="#9aa0a6"/></svg>
<div class="a" style="left:8px;top:243.0px;width:10px;height:12px;background:#fff;border-radius:1px"></div>
<div class="dt" style="left:24.5px;top:242.5px;color:#bdc1c6;font-size:12.3px;">fa-solid-900.ttf</div>
<div class="dt" style="left:423.0px;top:242.5px;color:#80868b;font-size:12.3px;">Finished</div>
<div class="dt" style="left:548.0px;top:242.5px;color:#bdc1c6;font-size:12.3px;">font</div>
<div class="dt" style="left:673.0px;top:242.5px;color:#bdc1c6;font-size:12.3px;"><u>all.css</u></div>
<div class="dt" style="left:796px;top:242.5px;width:200px;text-align:right;color:#80868b;font-size:12.3px">(memory cache)</div>
<div class="dt" style="left:921px;top:242.5px;width:200px;text-align:right;color:#bdc1c6;font-size:12.3px">0 ms</div>
<div class="a" style="left:8px;top:264.5px;width:10px;height:12px;background:#fff;border-radius:1px"></div>
<div class="dt" style="left:24.5px;top:264.0px;color:#f50505;font-size:12.3px;">login.php?usr=developer9%40totalsoftware.com.ve&amp;pwd=babe34c6…</div>
<div class="dt" style="left:423.0px;top:264.0px;color:#f50505;font-size:12.3px;">403</div>
<div class="dt" style="left:548.0px;top:264.0px;color:#f50505;font-size:12.3px;">xhr</div>
<div class="dt" style="left:673.0px;top:264.0px;color:#f50505;font-size:12.3px;"><u>main.js?v=2:59</u></div>
<div class="dt" style="left:796px;top:264px;width:200px;text-align:right;color:#f50505;font-size:12.3px">461 B</div>
<div class="dt" style="left:921px;top:264px;width:200px;text-align:right;color:#f50505;font-size:12.3px">1.59 s</div>
<div class="a" style="left:8px;top:285.5px;width:10px;height:12px;background:#fff;border-radius:1px"></div>
<div class="dt" style="left:24.5px;top:285.0px;color:#f50505;font-size:12.3px;">login.php?usr=developer9%40totalsoftware.com.ve&amp;pwd=babe34c6…</div>
<div class="dt" style="left:423.0px;top:285.0px;color:#f50505;font-size:12.3px;">403</div>
<div class="dt" style="left:548.0px;top:285.0px;color:#f50505;font-size:12.3px;">xhr</div>
<div class="dt" style="left:673.0px;top:285.0px;color:#f50505;font-size:12.3px;"><u>main.js?v=2:59</u></div>
<div class="dt" style="left:796px;top:285px;width:200px;text-align:right;color:#f50505;font-size:12.3px">461 B</div>
<div class="dt" style="left:921px;top:285px;width:200px;text-align:right;color:#f50505;font-size:12.3px">602 ms</div>
<div class="a" style="left:8px;top:306.5px;width:10px;height:12px;background:#fff;border-radius:1px"></div>
<div class="dt" style="left:24.5px;top:306.0px;color:#f50505;font-size:12.3px;">login.php?usr=developer9%40totalsoftware.com.ve&amp;pwd=babe34c6…</div>
<div class="dt" style="left:423.0px;top:306.0px;color:#f50505;font-size:12.3px;">403</div>
<div class="dt" style="left:548.0px;top:306.0px;color:#f50505;font-size:12.3px;">xhr</div>
<div class="dt" style="left:673.0px;top:306.0px;color:#f50505;font-size:12.3px;"><u>main.js?v=2:59</u></div>
<div class="dt" style="left:796px;top:306px;width:200px;text-align:right;color:#f50505;font-size:12.3px">461 B</div>
<div class="dt" style="left:921px;top:306px;width:200px;text-align:right;color:#f50505;font-size:12.3px">3.51 s</div>
<div class="a" style="left:1130px;top:242px;width:2px;height:81px;background:#7a2140"></div>
<div class="a" style="left:1242px;top:265px;width:2px;height:11px;background:#2b9bf0"></div>
<div class="a" style="left:1247px;top:286px;width:2px;height:11px;background:#2b9bf0"></div>
<div class="a" style="left:1312px;top:242px;width:14px;height:81px;background:#2b2c2f"></div>
<div class="a" style="left:1312px;top:308px;width:14px;height:15px;background:#3c3d40;border:1px solid #555"></div>
<div class="a" style="left:1309px;top:307px;width:2px;height:11px;background:#2b9bf0"></div>
<div class="hl" style="top:323px;background:#4a4c50"></div>
<div class="hl" style="top:350px;background:#3a3b3e"></div>
<div class="dt" style="left:11.0px;top:332.0px;color:#bdc1c6;font-size:12.2px;">59 requests</div>
<div class="dt" style="left:94.4px;top:332.0px;color:#bdc1c6;font-size:12.2px;">5.1 kB transferred</div>
<div class="dt" style="left:211.6px;top:332.0px;color:#bdc1c6;font-size:12.2px;">2.0 MB resources</div>
<div class="dt" style="left:323.2px;top:332.0px;color:#bdc1c6;font-size:12.2px;">Finish: 5.4 min</div>
<div class="dt" style="left:419.0px;top:332.0px;color:#3ba1f3;font-size:12.2px;">DOMContentLoaded: 697 ms</div>
<div class="dt" style="left:595.8px;top:332.0px;color:#ef2a4b;font-size:12.2px;">Load: 725 ms</div>
<div class="vl" style="left:84px;top:329px;height:16px;background:#4a4c50"></div>
<div class="vl" style="left:201px;top:329px;height:16px;background:#4a4c50"></div>
<div class="vl" style="left:313px;top:329px;height:16px;background:#4a4c50"></div>
<div class="vl" style="left:409px;top:329px;height:16px;background:#4a4c50"></div>
<div class="vl" style="left:586px;top:329px;height:16px;background:#4a4c50"></div>
</div>
<!--/DEV-->

</body></html>
